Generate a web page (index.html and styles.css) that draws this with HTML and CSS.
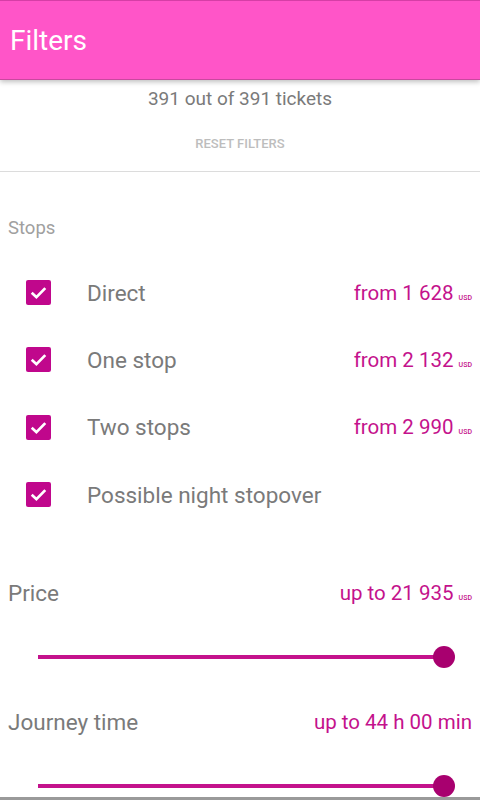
FILE: index.html
```html
<!DOCTYPE html>
<html>
<head>
<meta charset="utf-8">
<link rel="stylesheet" href="styles.css">
</head>
<body>
<div class="app">
  <header class="bar"><h1 class="title">Filters</h1></header>
  <section class="summary">
    <div class="count">391 out of 391 tickets</div>
    <div class="reset">RESET FILTERS</div>
  </section>
  <section class="stops">
    <div class="section-label">Stops</div>
    <div class="rows">
      <div class="row">
        <span class="check"><svg viewBox="0 0 24 24" width="25" height="25"><rect x="0" y="0" width="24" height="24" rx="2" fill="#C0078C"/><path d="M5.5 12.2 L10 16.5 L18.5 7.8" fill="none" stroke="#fff" stroke-width="2.6"/></svg></span>
        <span class="label">Direct</span>
        <span class="price">from 1 628 <small>USD</small></span>
      </div>
      <div class="row">
        <span class="check"><svg viewBox="0 0 24 24" width="25" height="25"><rect x="0" y="0" width="24" height="24" rx="2" fill="#C0078C"/><path d="M5.5 12.2 L10 16.5 L18.5 7.8" fill="none" stroke="#fff" stroke-width="2.6"/></svg></span>
        <span class="label">One stop</span>
        <span class="price">from 2 132 <small>USD</small></span>
      </div>
      <div class="row">
        <span class="check"><svg viewBox="0 0 24 24" width="25" height="25"><rect x="0" y="0" width="24" height="24" rx="2" fill="#C0078C"/><path d="M5.5 12.2 L10 16.5 L18.5 7.8" fill="none" stroke="#fff" stroke-width="2.6"/></svg></span>
        <span class="label">Two stops</span>
        <span class="price">from 2 990 <small>USD</small></span>
      </div>
      <div class="row">
        <span class="check"><svg viewBox="0 0 24 24" width="25" height="25"><rect x="0" y="0" width="24" height="24" rx="2" fill="#C0078C"/><path d="M5.5 12.2 L10 16.5 L18.5 7.8" fill="none" stroke="#fff" stroke-width="2.6"/></svg></span>
        <span class="label">Possible night stopover</span>
      </div>
    </div>
  </section>
  <section class="range">
    <div class="range-head">
      <span class="range-label">Price</span>
      <span class="range-value">up to 21 935 <small>USD</small></span>
    </div>
    <div class="slider"><div class="track"></div><div class="thumb"></div></div>
  </section>
  <section class="range">
    <div class="range-head">
      <span class="range-label">Journey time</span>
      <span class="range-value">up to 44 h 00 min</span>
    </div>
    <div class="slider"><div class="track"></div><div class="thumb"></div></div>
  </section>
</div>
</body>
</html>
```
FILE: styles.css
```css
* { box-sizing: border-box; }
html, body { margin: 0; padding: 0; }
body {
  width: 480px;
  height: 800px;
  overflow: hidden;
  background: #fff;
  font-family: Roboto, "Noto Sans", sans-serif;
}
.app {
  height: 800px;
  display: flex;
  flex-direction: column;
  border-bottom: 3px solid #9a9a9a;
  overflow: hidden;
}
.bar {
  height: 80px;
  flex: none;
  background: #FF55C8;
  border-top: 1px solid #d63ea6;
  border-bottom: 1px solid #c9489f;
  box-shadow: 0 2px 5px rgba(0,0,0,0.25);
  display: flex;
  align-items: center;
  padding-left: 10px;
  position: relative;
  z-index: 1;
}
.title {
  margin: 0;
  color: #fff;
  font-weight: 400;
  font-size: 28px;
  line-height: 1;
  padding-top: 2px;
}
.summary {
  border-bottom: 1px solid #dcdcdc;
  display: flex;
  flex-direction: column;
  align-items: center;
  height: 92px;
  flex: none;
}
.count {
  margin-top: 7px;
  font-size: 19px;
  color: #7a7a7a;
  line-height: 24px;
}
.reset {
  margin-top: 24px;
  font-size: 13px;
  color: #bdbdbd;
  font-weight: 500;
  line-height: 18px;
}
.stops {
  padding-top: 46px;
  flex: none;
}
.section-label {
  padding-left: 8px;
  font-size: 18.5px;
  color: #a0a0a0;
  line-height: 20px;
}
.rows { margin-top: 21px; }
.row {
  display: flex;
  align-items: center;
  height: 67.3px;
  padding-left: 26px;
  padding-right: 8px;
}
.check { width: 25px; height: 25px; display: block; flex: none; }
.check svg { display: block; }
.label {
  margin-left: 36px;
  font-size: 22.5px;
  color: #7a7a7a;
  flex: 1;
}
.price, .range-value {
  color: #C4128C;
  font-size: 20.5px;
}
.price small, .range-value small {
  font-size: 7px;
  font-weight: 500;
}
.range { padding: 0 8px; flex: none; }
.range-head {
  display: flex;
  justify-content: space-between;
  align-items: center;
  height: 30px;
}
.stops + .range { margin-top: 50px; }
.range + .range { margin-top: 38px; }
.range-label { font-size: 22.5px; color: #7a7a7a; }
.slider {
  position: relative;
  height: 24px;
  margin: 37px 28px 0 30px;
}
.track {
  position: absolute;
  left: 0; right: 0;
  top: 10px;
  height: 4px;
  background: #C4128C;
}
.thumb {
  position: absolute;
  right: -11px;
  top: 1px;
  width: 22px;
  height: 22px;
  border-radius: 50%;
  background: #A8006F;
}
```
